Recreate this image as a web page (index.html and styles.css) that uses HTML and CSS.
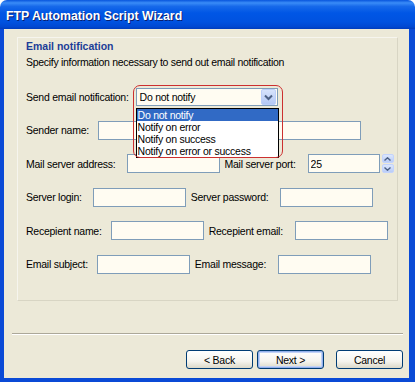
FILE: index.html
```html
<!DOCTYPE html>
<html lang="en">
<head>
    <meta charset="UTF-8" />
    <title>FTP Automation Script Wizard</title>
    <link rel="stylesheet" href="styles.css">
</head>
<body>
<div class="window">
    <div class="titlebar">
        <span class="titlebar__text">FTP Automation Script Wizard</span>
    </div>
    <div class="frame">
        <div class="client">
            <div class="panel">
                <div class="panel__title">Email notification</div>
                <div class="panel__desc">Specify information necessary to send out email notification</div>

                <div class="form">
                    <div class="row row--combo">
                        <label class="row__label">Send email notification:</label>
                        <div class="combo">
                            <span class="combo__value">Do not notify</span>
                            <span class="combo__btn">
                                <svg width="9" height="7" viewBox="0 0 9 7"><path d="M1 1.5 L4.5 5 L8 1.5" fill="none" stroke="#4d6185" stroke-width="2"/></svg>
                            </span>
                            <ul class="combo__list">
                                <li class="combo__item combo__item--active">Do not notify</li>
                                <li class="combo__item">Notify on error</li>
                                <li class="combo__item">Notify on success</li>
                                <li class="combo__item">Notify on error or success</li>
                            </ul>
                            <div class="callout"></div>
                        </div>
                    </div>

                    <div class="row">
                        <label class="row__label">Sender name:</label>
                        <input class="field field--wide" type="text">
                    </div>

                    <div class="row">
                        <label class="row__label row__label--wide">Mail server address:</label>
                        <input class="field" type="text">
                        <label class="row__label row__label--second">Mail server port:</label>
                        <input class="field field--port" type="text" value="25">
                        <span class="spin">
                            <span class="spin__btn"><svg width="7" height="4" viewBox="0 0 7 4"><path d="M0.5 3.5 L3.5 0.8 L6.5 3.5" fill="none" stroke="#4d6185" stroke-width="1.4"/></svg></span>
                            <span class="spin__btn"><svg width="7" height="4" viewBox="0 0 7 4"><path d="M0.5 0.5 L3.5 3.2 L6.5 0.5" fill="none" stroke="#4d6185" stroke-width="1.4"/></svg></span>
                        </span>
                    </div>

                    <div class="row">
                        <label class="row__label row__label--wide">Server login:</label>
                        <input class="field" type="text">
                        <label class="row__label row__label--second">Server password:</label>
                        <input class="field" type="text">
                    </div>

                    <div class="row">
                        <label class="row__label">Recepient name:</label>
                        <input class="field" type="text">
                        <label class="row__label row__label--second">Recepient email:</label>
                        <input class="field" type="text">
                    </div>

                    <div class="row">
                        <label class="row__label">Email subject:</label>
                        <input class="field" type="text">
                        <label class="row__label row__label--second">Email message:</label>
                        <input class="field" type="text">
                    </div>
                </div>
            </div>

            <div class="separator"></div>

            <div class="buttons">
                <button class="btn">&lt; Back</button>
                <button class="btn btn--default">Next &gt;</button>
                <button class="btn btn--cancel">Cancel</button>
            </div>
        </div>
    </div>
</div>
</body>
</html>
```

FILE: styles.css
```css
*,
*::before,
*::after {
    box-sizing: border-box;
}

html,
body {
    margin: 0;
    padding: 0;
}

body {
    font-family: 'Liberation Sans', Arial, sans-serif;
    font-size: 10.5px;
    letter-spacing: -0.25px;
    color: #000;
    background: #fff;
}

.window {
    width: 415px;
    height: 382px;
    display: flex;
    flex-direction: column;
}

.titlebar {
    height: 29px;
    flex: none;
    background: linear-gradient(180deg, #0855dd 0%, #3a8cf7 10%, #1769ea 22%, #0056e5 45%, #0052e0 75%, #0048d2 92%, #003cbc 100%);
    border-radius: 7px 7px 0 0;
    padding: 9px 0 0 6px;
}

.titlebar__text {
    color: #fff;
    font-family: 'Liberation Sans', Arial, sans-serif;
    font-weight: bold;
    font-size: 12.3px;
    letter-spacing: 0;
    text-shadow: 1px 1px 0 #0a1e6e;
}

.frame {
    flex: 1;
    background: #0a4ad6;
    padding: 0 6px 4px 4px;
    display: flex;
}

.client {
    flex: 1;
    background: #ece9d8;
    display: flex;
    flex-direction: column;
}

.panel {
    margin: 8px 11px 0 13px;
    height: 264px;
    border: 1px solid #f6f5ee;
    border-right-color: #d8d5c4;
    border-bottom-color: #d8d5c4;
    padding: 2px 0 0 8px;
}

.panel__title {
    font-weight: bold;
    color: #1b3d97;
    line-height: 13px;
    letter-spacing: 0;
}

.panel__desc {
    margin-top: 3px;
    line-height: 13px;
    letter-spacing: -0.3px;
}

.form {
    margin-top: 19px;
    display: flex;
    flex-direction: column;
    gap: 14.5px;
}

.row {
    display: flex;
    align-items: center;
    height: 19px;
}

.row--combo {
    height: 18px;
}

.row__label {
    margin-right: 9px;
    white-space: nowrap;
}

.row__label--wide {
    margin-right: 11px;
}

.row--combo .row__label {
    margin-right: 7px;
}

.row__label--second {
    margin-left: 5px;
    margin-right: 12px;
}

.field {
    width: 93px;
    height: 19px;
    border: 1px solid #7f9db9;
    background: #fffcf2;
    font: inherit;
    letter-spacing: inherit;
    padding: 0 2px;
    margin: 0;
}

.field--wide {
    width: 263px;
}

.field--port {
    width: 72px;
}

.spin {
    display: flex;
    flex-direction: column;
    margin-left: 2px;
    height: 19px;
    gap: 1px;
}

.spin__btn {
    width: 12px;
    height: 9px;
    display: flex;
    align-items: center;
    justify-content: center;
    background: linear-gradient(180deg, #dce7fd, #b9ccf7);
    border: 1px solid #c3d3fd;
    border-radius: 2px;
}

.combo {
    position: relative;
    width: 142px;
    height: 18px;
    border: 1px solid #7f9db9;
    background: #fffcf2;
    display: flex;
    align-items: center;
}

.combo__value {
    flex: 1;
    padding-left: 3px;
}

.combo__btn {
    width: 15px;
    height: 16px;
    margin-right: 1px;
    display: flex;
    align-items: center;
    justify-content: center;
    background: linear-gradient(180deg, #d7e3fc, #b4c8f5);
    border: 1px solid #bccffa;
    border-radius: 2px;
}

.combo__list {
    position: absolute;
    top: 19px;
    left: -1px;
    width: 143px;
    margin: 0;
    padding: 0;
    list-style: none;
    background: #fff;
    border: 1px solid #000;
    z-index: 2;
}

.combo__item {
    height: 12px;
    line-height: 12px;
    padding-left: 1px;
}

.combo__item--active {
    background: #316ac5;
    color: #fff;
}

.callout {
    position: absolute;
    top: -4px;
    left: -4px;
    width: 150px;
    height: 73px;
    border: 1px solid #cc3030;
    border-radius: 7px;
    z-index: 3;
    pointer-events: none;
}

.separator {
    margin: 32px 6px 0 8px;
    height: 2px;
    border-top: 1px solid #aca899;
    border-bottom: 1px solid #fff;
}

.buttons {
    display: flex;
    justify-content: flex-end;
    margin: 15px 6px 0 0;
}

.btn {
    width: 67px;
    height: 19px;
    margin-left: 4px;
    font: inherit;
    letter-spacing: inherit;
    color: #000;
    border: 1px solid #003c74;
    border-radius: 3px;
    background: linear-gradient(180deg, #ffffff 0%, #f5f4ee 60%, #dcd9c9 100%);
    padding: 0;
}

.btn--default {
    box-shadow: inset 0 0 0 1px #93b0ec, inset 0 0 0 2px #c2d3f6;
}

.btn--cancel {
    margin-left: 12px;
}
```
